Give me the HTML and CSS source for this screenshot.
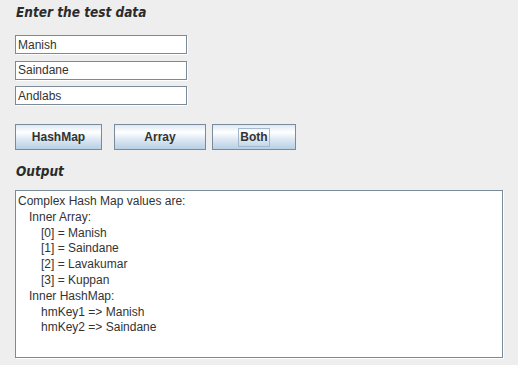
FILE: index.html
```html
<!DOCTYPE html>
<html lang="en">
<head>
    <meta charset="UTF-8">
    <title>Complex HashMap Test</title>
    <link rel="stylesheet" href="styles.css">
</head>
<body>

<div class="panel">
    <h2 class="section-title">Enter the test data</h2>
    <div class="fields">
        <input type="text" class="field" value="Manish">
        <input type="text" class="field" value="Saindane">
        <input type="text" class="field" value="Andlabs">
    </div>

    <div class="buttons">
        <button class="btn btn-hashmap">HashMap</button>
        <button class="btn btn-array">Array</button>
        <button class="btn btn-both"><span class="focus">Both</span></button>
    </div>

    <h2 class="section-title output-title">Output</h2>
    <div class="output">
        <div class="line">Complex Hash Map values are:</div>
        <div class="line indent-1">Inner Array:</div>
        <div class="line indent-2">[0] = Manish</div>
        <div class="line indent-2">[1] = Saindane</div>
        <div class="line indent-2">[2] = Lavakumar</div>
        <div class="line indent-2">[3] = Kuppan</div>
        <div class="line indent-1">Inner HashMap:</div>
        <div class="line indent-2">hmKey1 =&gt; Manish</div>
        <div class="line indent-2">hmKey2 =&gt; Saindane</div>
    </div>
</div>

</body>
</html>
```

FILE: styles.css
```css
body {
    margin: 0;
    padding: 0;
    background-color: #eeeeee;
    font-family: 'Liberation Sans', Arial, sans-serif;
    font-size: 12px;
    color: #333333;
    height: 100vh;
    overflow: hidden;
}
.panel {
    padding: 4px 0 0 15px;
}
.section-title {
    margin: 0 0 0 1px;
    font-family: 'DejaVu Sans Condensed', 'DejaVu Sans', sans-serif;
    font-stretch: condensed;
    font-size: 13.5px;
    font-weight: bold;
    font-style: italic;
    line-height: 17px;
    color: #2b2b2b;
}
.fields {
    display: flex;
    flex-direction: column;
    gap: 6.5px;
    margin-top: 14px;
}
.field {
    width: 172px;
    height: 19px;
    box-sizing: border-box;
    margin: 0;
    padding: 0 0 0 2px;
    border: 1px solid #7a8a99;
    box-shadow: 1px 1px 0 #ffffff;
    background-color: #ffffff;
    font-family: 'Liberation Sans', Arial, sans-serif;
    font-size: 12px;
    color: #333333;
    outline: none;
}
.buttons {
    display: flex;
    margin-top: 19px;
}
.btn {
    height: 26px;
    box-sizing: border-box;
    margin: 0;
    padding: 0;
    border: 1px solid #7a8a99;
    background: linear-gradient(#dde8f3 0%, #ffffff 30%, #dde8f3 60%, #b8cfe5 100%);
    font-family: 'Liberation Sans', Arial, sans-serif;
    font-size: 12px;
    font-weight: bold;
    color: #333333;
    cursor: pointer;
}
.btn-hashmap {
    width: 87px;
    margin-right: 12px;
}
.btn-array {
    width: 92px;
    margin-right: 6px;
}
.btn-both {
    width: 84px;
}
.focus {
    display: inline-block;
    border: 1px solid #a3b8cc;
    padding: 1px 1px 2px 1px;
    line-height: 14px;
}
.output-title {
    margin-top: 13px;
}
.output {
    width: 488px;
    height: 168px;
    box-sizing: border-box;
    margin-top: 10px;
    padding: 3px 0 0 2px;
    border: 1px solid #7a8a99;
    box-shadow: 1px 1px 0 #ffffff;
    background-color: #ffffff;
}
.line {
    line-height: 15.8px;
    white-space: nowrap;
}
.indent-1 {
    padding-left: 11px;
}
.indent-2 {
    padding-left: 23px;
}
```
